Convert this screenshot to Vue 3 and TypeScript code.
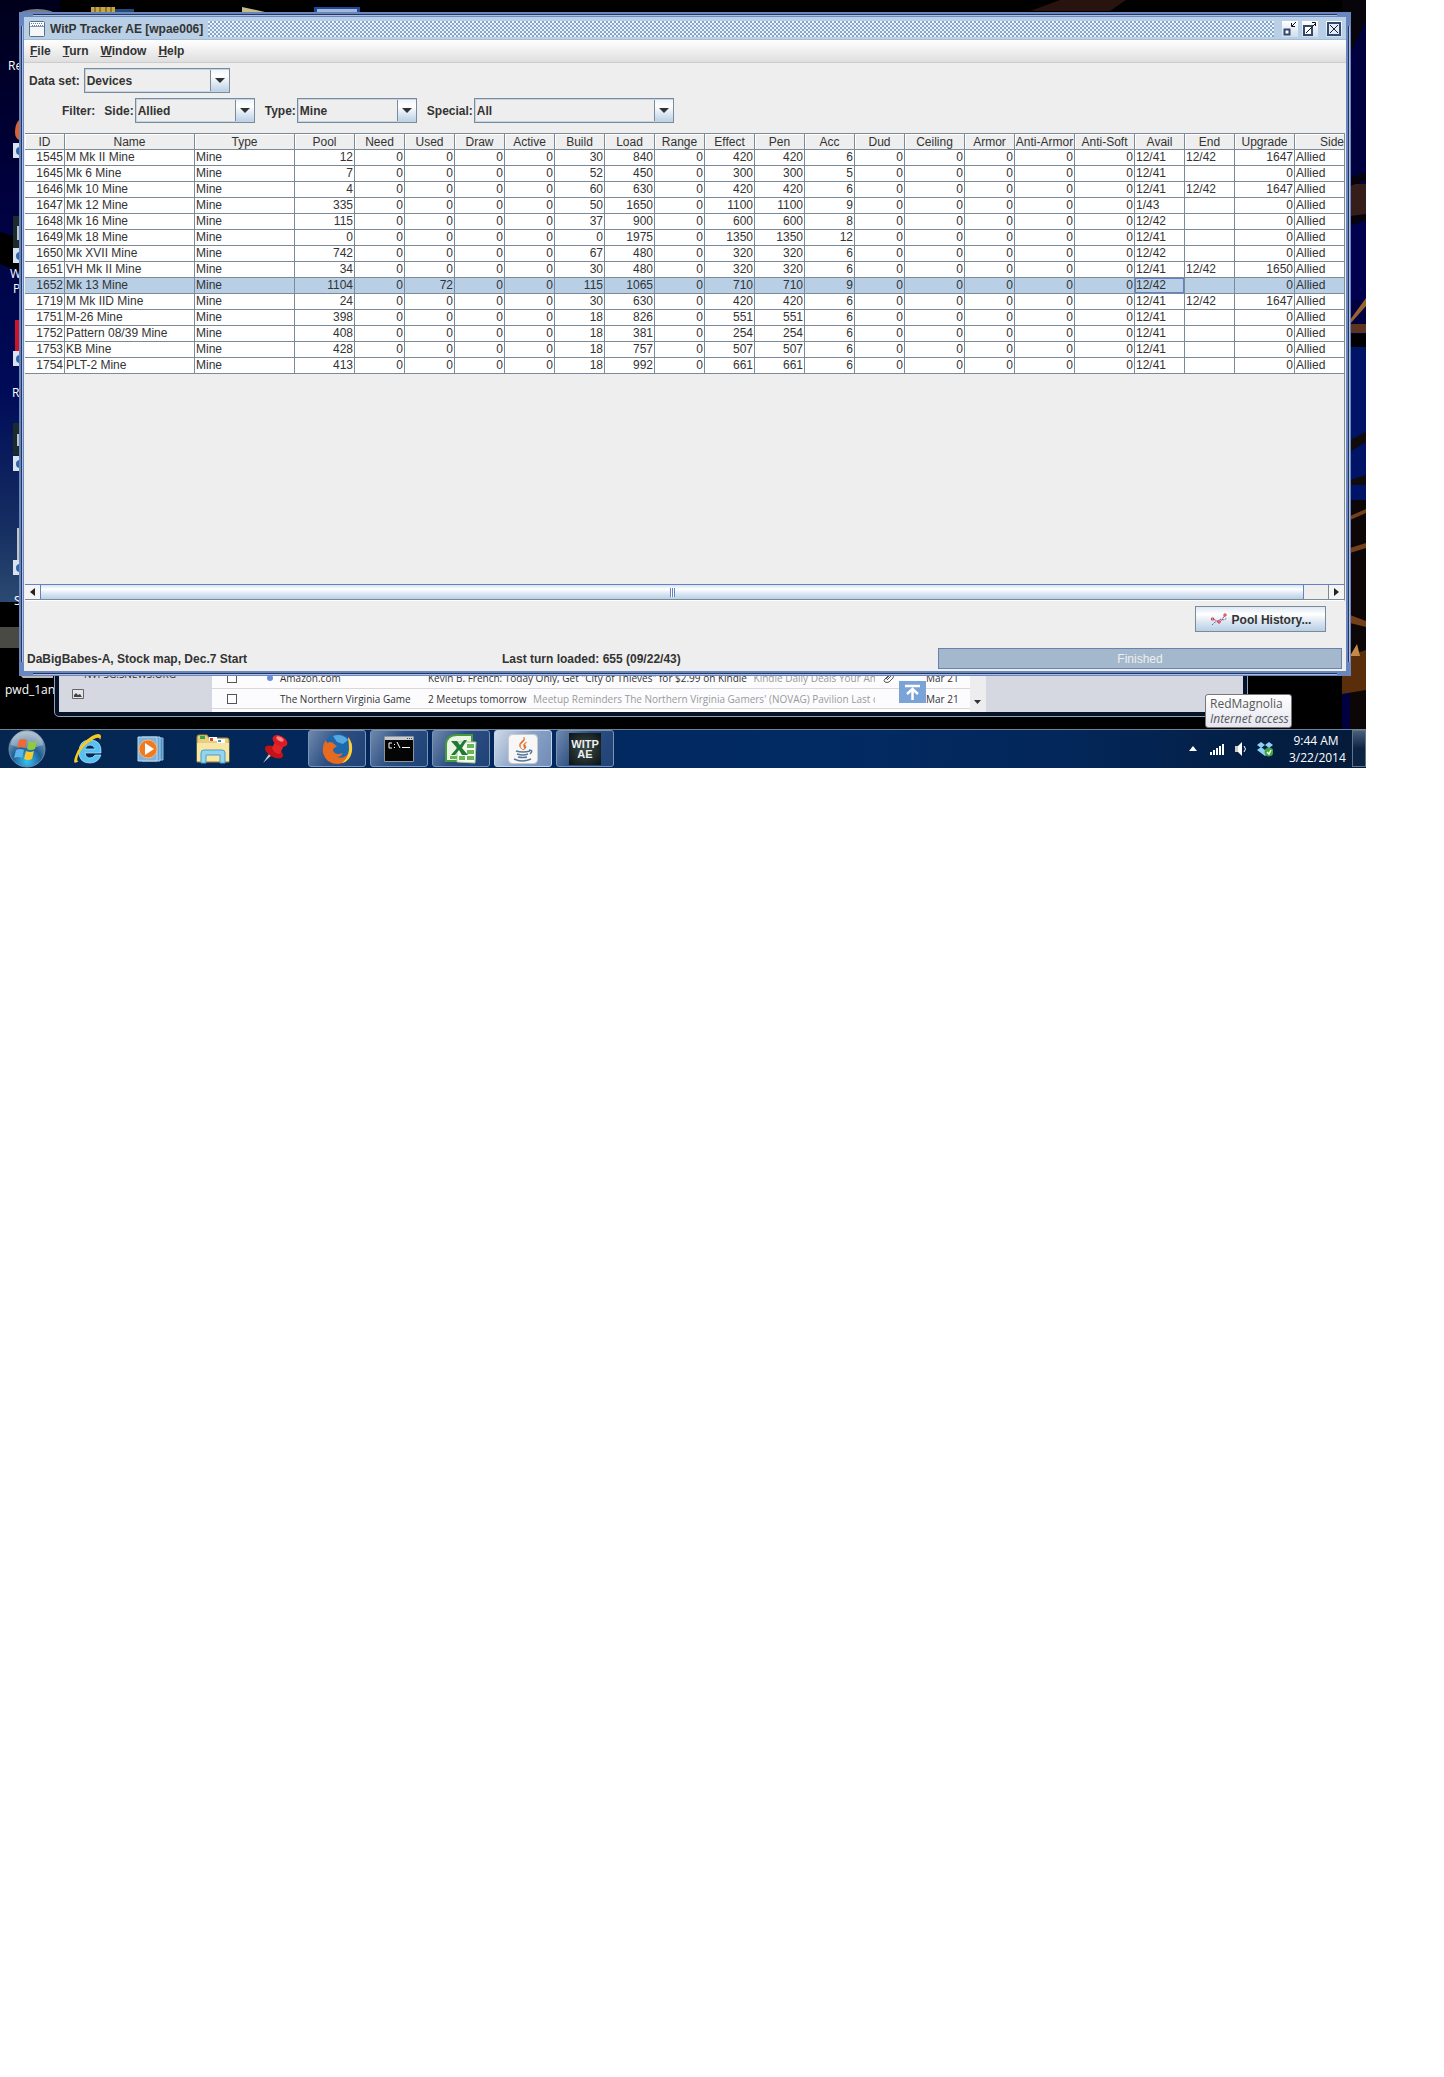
<script setup lang="ts">
import { ref } from 'vue'

interface Column {
  label: string
  width: number
  left?: boolean
}

const columns: Column[] = [
  { label: 'ID', width: 40 },
  { label: 'Name', width: 130, left: true },
  { label: 'Type', width: 100, left: true },
  { label: 'Pool', width: 60 },
  { label: 'Need', width: 50 },
  { label: 'Used', width: 50 },
  { label: 'Draw', width: 50 },
  { label: 'Active', width: 50 },
  { label: 'Build', width: 50 },
  { label: 'Load', width: 50 },
  { label: 'Range', width: 50 },
  { label: 'Effect', width: 50 },
  { label: 'Pen', width: 50 },
  { label: 'Acc', width: 50 },
  { label: 'Dud', width: 50 },
  { label: 'Ceiling', width: 60 },
  { label: 'Armor', width: 50 },
  { label: 'Anti-Armor', width: 60 },
  { label: 'Anti-Soft', width: 60 },
  { label: 'Avail', width: 50, left: true },
  { label: 'End', width: 50, left: true },
  { label: 'Upgrade', width: 60 },
  { label: 'Side', width: 75, left: true },
]

type Device = [number, string, number, number, number, number, number, number, string, string, number]

// id, name, pool, used, build, load, effect, accuracy, avail, end, upgrade
const devices: Device[] = [
  [1545, 'M Mk II Mine', 12, 0, 30, 840, 420, 6, '12/41', '12/42', 1647],
  [1645, 'Mk 6 Mine', 7, 0, 52, 450, 300, 5, '12/41', '', 0],
  [1646, 'Mk 10 Mine', 4, 0, 60, 630, 420, 6, '12/41', '12/42', 1647],
  [1647, 'Mk 12 Mine', 335, 0, 50, 1650, 1100, 9, '1/43', '', 0],
  [1648, 'Mk 16 Mine', 115, 0, 37, 900, 600, 8, '12/42', '', 0],
  [1649, 'Mk 18 Mine', 0, 0, 0, 1975, 1350, 12, '12/41', '', 0],
  [1650, 'Mk XVII Mine', 742, 0, 67, 480, 320, 6, '12/42', '', 0],
  [1651, 'VH Mk II Mine', 34, 0, 30, 480, 320, 6, '12/41', '12/42', 1650],
  [1652, 'Mk 13 Mine', 1104, 72, 115, 1065, 710, 9, '12/42', '', 0],
  [1719, 'M Mk IID Mine', 24, 0, 30, 630, 420, 6, '12/41', '12/42', 1647],
  [1751, 'M-26 Mine', 398, 0, 18, 826, 551, 6, '12/41', '', 0],
  [1752, 'Pattern 08/39 Mine', 408, 0, 18, 381, 254, 6, '12/41', '', 0],
  [1753, 'KB Mine', 428, 0, 18, 757, 507, 6, '12/41', '', 0],
  [1754, 'PLT-2 Mine', 413, 0, 18, 992, 661, 6, '12/41', '', 0],
]

const rows = devices.map(([id, name, pool, used, build, load, effect, acc, avail, end, upgrade]) => [
  id, name, 'Mine', pool, 0, used, 0, 0, build, load, 0, effect, effect, acc, 0, 0, 0, 0, 0, avail, end, upgrade, 'Allied',
])

const selected = ref(1652)
const availColumn = 19
const menus = ['File', 'Turn', 'Window', 'Help']
const dataSet = ref('Devices')
const side = ref('Allied')
const kind = ref('Mine')
const special = ref('All')
</script>

<template>
  <div class="desktop">
    <div class="workspace">
      <svg class="wall wall-left" width="60" height="729" viewBox="0 0 60 729" aria-hidden="true">
        <defs>
          <linearGradient id="sky" x1="0" y1="0" x2="0" y2="1">
            <stop offset="0" stop-color="#00001c" />
            <stop offset=".3" stop-color="#00003c" />
            <stop offset=".65" stop-color="#000b58" />
            <stop offset=".88" stop-color="#162f62" />
            <stop offset="1" stop-color="#2b4a72" />
          </linearGradient>
        </defs>
        <rect width="60" height="602" fill="url(#sky)" />
        <path d="M0 232 20 238V272L0 264Z" fill="#000" />
        <rect y="602" width="60" height="127" fill="#000" />
        <rect y="627" width="20" height="21" fill="#4a4a44" />
        <path d="M19 120q-4 4-4 12 0 6 4 8z" fill="#e0602c" />
        <path d="M13 216h6v32h-6z" fill="#1b2a2a" />
        <path d="M17 226h2v14h-2z" fill="#b8c4c4" />
        <path d="M15 320h4v31h-4z" fill="#cc1426" />
        <path d="M13 423h6v32h-6z" fill="#1b2a2a" />
        <path d="M17 434h2v12h-2z" fill="#b8c4c4" />
        <path d="M17 528h2v32h-2z" fill="#c3c7bf" />
        <g v-for="y in [143, 248, 351, 456, 560]" :key="y">
          <rect x="13" :y="y" width="8" height="15" fill="#d9e2ee" />
          <circle cx="20" :cy="y + 8" r="4" fill="#2d66a8" />
        </g>
        <path d="M21 676h32v2H23z" fill="#b8b8b8" />
      </svg>
      <svg class="wall wall-right" width="24" height="729" viewBox="0 0 24 729" aria-hidden="true">
        <rect width="24" height="729" fill="#00003f" />
        <path d="M0 0h24v20L10 50H0z" fill="#07040b" />
        <path d="M0 182 24 174V300H0z" fill="#00004e" />
        <path d="M6 182 24 174v6L6 188z" fill="#000" />
        <path d="M8 184h16v36l-16 0z" fill="#351d1a" />
        <path d="M8 178l16-6v8l-16 6zM8 216l16-2v6l-16 6z" fill="#08030a" />
        <path d="M8 320 24 298v8L8 324z" fill="#9c6230" />
        <path d="M8 324h16v9H8z" fill="#5d351f" />
        <path d="M8 334h16v13H8z" fill="#000" />
        <path d="M8 347h16v155H8z" fill="#001467" />
        <path d="M8 440l16-8v10l-16 10zM8 480l16-5v10H8z" fill="#120b0b" />
        <path d="M8 500h16v229H8z" fill="#0c0606" />
        <path d="M8 516l16-7v4l-16 7zM8 548l16-5v5l-16 5zM8 615l16 6v6l-16-4z" fill="#74401a" />
        <path d="M0 658l24-8v40l-24 4z" fill="#5b2e0b" />
        <path d="M8 656l7-12 3 12z" fill="#c58a4a" />
      </svg>
      <svg class="wall wall-top" width="1200" height="12" viewBox="0 0 1200 12" aria-hidden="true">
        <ellipse cx="37" cy="15" rx="18" ry="6" fill="#777d86" />
        <path d="M91 7h24v5H91z" fill="#c6a744" />
        <path d="M95 7v5M100 7v5M106 7v5M111 7v5" stroke="#584514" />
        <path d="M115 9h19v3h-19z" fill="#254a7a" />
        <path d="M242 7l23 5h-23z" fill="#c7bb86" />
        <path d="M314 7h46v5h-46z" fill="#1c489d" />
        <path d="M317 9h40v3h-40z" fill="#a6b7d3" />
        <path d="M1060 0h66l-16 11h-80z" fill="#29130e" />
      </svg>
      <span class="label l1">Re</span>
      <span class="label l2">W</span>
      <span class="label l3">P</span>
      <span class="label l4">R</span>
      <span class="label l5">S</span>
      <span class="label l6">pwd_1an</span>

      <section class="mail" aria-label="Mail">
        <div class="folders">
          <span class="cut">NVPSG.SNEWS.ORG</span>
          <svg width="12" height="10" viewBox="0 0 12 10"><path d="M.5.5h11v9H.5z" fill="#e4e6ea" stroke="#666" /><path d="M2 8V6l2-2 2 2 2-1 2 3z" fill="#444" /></svg>
        </div>
        <div class="letters">
          <div class="letter">
            <input type="checkbox" aria-label="Amazon.com" /><i class="dot on"></i>
            <span class="from">Amazon.com</span>
            <span class="subject">Kevin B. French: Today Only, Get "City of Thieves" for $2.99 on Kindle <em>Kindle Daily Deals Your Am</em></span>
            <svg class="clip" width="12" height="10" viewBox="0 0 12 10"><path d="M3 6l4-4q2-1 3 0t0 3L6 9Q4 10 2 9T2 6l4-4M4 7l4-4" fill="none" stroke="#555" /></svg>
            <span class="date">Mar 21</span>
          </div>
          <div class="letter">
            <input type="checkbox" aria-label="The Northern Virginia Gamers" /><i class="dot"></i>
            <span class="from">The Northern Virginia Game</span>
            <span class="subject">2 Meetups tomorrow <em>Meetup Reminders The Northern Virginia Gamers' (NOVAG) Pavilion Last chanc</em></span>
            <span class="clip"></span>
            <span class="date">Mar 21</span>
          </div>
          <button class="to-top" aria-label="Back to top">
            <svg width="17" height="17" viewBox="0 0 17 17"><path d="M1 2h15M8.500 16V6M3 10l5.500-5L14 10" fill="none" stroke="#fff" stroke-width="2.500" /></svg>
          </button>
        </div>
        <div class="mail-scroll"><svg width="7" height="4" viewBox="0 0 7 4"><path d="M0 0h7L3.500 4z" fill="#333" /></svg></div>
      </section>

      <main class="window">
        <div class="inner">
          <header class="title">
            <svg width="16" height="16" viewBox="0 0 16 16"><rect x=".5" y=".5" width="15" height="15" rx="1" fill="#f4f6f8" stroke="#5b6f8c" /><path d="M1 1h14v4H1z" fill="#fff" /><path d="M2 2.500h12M3 4.500h11" stroke="#5b7fae" stroke-dasharray="1 1" /><path d="M1 5.500h14" stroke="#8a97a8" /></svg>
            <h1>WitP Tracker AE [wpae006]</h1>
            <div class="bumps"></div>
            <button class="tb" aria-label="Minimize"><svg width="16" height="16" viewBox="0 0 16 16"><path d="M2.500 8.500h5v5h-5z" fill="#fff" stroke="#33486c" stroke-width="2" /><path d="M14 1l-4 4M9.500 2v3.500H13" fill="none" stroke="#111" /></svg></button>
            <button class="tb" aria-label="Maximize"><svg width="16" height="16" viewBox="0 0 16 16"><path d="M2 5h8v9H2z" fill="#fff" stroke="#33486c" stroke-width="2" /><path d="M4 12l9-9M10 1.500h3.500V5" fill="none" stroke="#111" /></svg></button>
            <button class="tb close" aria-label="Close"><svg width="16" height="16" viewBox="0 0 16 16"><path d="M2 2h12v12H2z" fill="#e4edf7" stroke="#33486c" stroke-width="2" /><path d="M4 4l8 8M12 4l-8 8" stroke="#222" stroke-width="1" /></svg></button>
          </header>
          <nav class="menu">
            <button v-for="m in menus" :key="m"><u>{{ m[0] }}</u>{{ m.slice(1) }}</button>
          </nav>

          <div class="filters">
            <div class="line">
              <label for="set">Data set:</label>
              <span class="combo w146"><select id="set" v-model="dataSet"><option>Devices</option></select><svg width="10" height="5" viewBox="0 0 10 5"><path d="M0 0h10L5 5z" fill="#333" /></svg></span>
            </div>
            <div class="line second">
              <span class="lead">Filter:</span>
              <label for="side">Side:</label>
              <span class="combo w120"><select id="side" v-model="side"><option>Allied</option></select><svg width="10" height="5" viewBox="0 0 10 5"><path d="M0 0h10L5 5z" fill="#333" /></svg></span>
              <label class="next" for="kind">Type:</label>
              <span class="combo w120"><select id="kind" v-model="kind"><option>Mine</option></select><svg width="10" height="5" viewBox="0 0 10 5"><path d="M0 0h10L5 5z" fill="#333" /></svg></span>
              <label class="next" for="special">Special:</label>
              <span class="combo w200"><select id="special" v-model="special"><option>All</option></select><svg width="10" height="5" viewBox="0 0 10 5"><path d="M0 0h10L5 5z" fill="#333" /></svg></span>
            </div>
          </div>

          <div class="pane">
            <div class="viewport">
              <table>
                <colgroup><col v-for="c in columns" :key="c.label" :style="{ width: c.width + 'px' }" /></colgroup>
                <thead>
                  <tr><th v-for="c in columns" :key="c.label" scope="col">{{ c.label }}</th></tr>
                </thead>
                <tbody>
                  <tr v-for="r in rows" :key="r[0]" :class="{ selected: r[0] === selected }" @click="selected = Number(r[0])">
                    <td v-for="(v, i) in r" :key="i" :class="{ left: columns[i].left, focus: i === availColumn }">{{ v }}</td>
                  </tr>
                </tbody>
              </table>
            </div>
            <div class="scrollbar">
              <button aria-label="Scroll left"><svg width="5" height="8" viewBox="0 0 5 8"><path d="M5 0v8L0 4z" fill="#222" /></svg></button>
              <div class="thumb"><i></i></div>
              <div class="track"></div>
              <button aria-label="Scroll right"><svg width="5" height="8" viewBox="0 0 5 8"><path d="M0 0v8l5-4z" fill="#222" /></svg></button>
            </div>
          </div>

          <div class="actions">
            <button class="history">
              <svg width="16" height="14" viewBox="0 0 16 14"><path d="M1 12l3-3 3-1 3-2 3 1 3-2" fill="none" stroke="#4a68b8" stroke-dasharray="2 1" /><path d="M2 6l4 2 3 1 3-4 3-4" fill="none" stroke="#d63a45" stroke-dasharray="3 1" /><path d="M.500 5h2v2h-2zM7 8h2v2H7zM13 1h2v2h-2z" fill="#f4d9df" stroke="#d63a45" /></svg>
              Pool History...
            </button>
          </div>
          <footer class="status">
            <span>DaBigBabes-A, Stock map, Dec.7 Start</span>
            <span>Last turn loaded: 655 (09/22/43)</span>
            <div class="progress" role="progressbar" aria-valuenow="100">Finished</div>
          </footer>
        </div>
      </main>

      <div class="tip" role="tooltip">RedMagnolia<br /><i>Internet access</i></div>
    </div>

    <div class="taskbar">
      <button class="start" aria-label="Start">
        <svg width="38" height="38" viewBox="0 0 38 38">
          <defs>
            <radialGradient id="orb" cx=".5" cy=".85" r=".8"><stop offset="0" stop-color="#35c3f4" /><stop offset=".5" stop-color="#1f5f94" /><stop offset="1" stop-color="#8fa6bb" /></radialGradient>
          </defs>
          <circle cx="19" cy="19" r="18" fill="url(#orb)" stroke="#6f8ba6" />
          <path d="M3 15a16 15 0 0 1 32 0q-16 6-32 0z" fill="#fff" opacity=".3" />
          <path d="M11 10q4-2 8 0l-2 8q-4-2-8 0z" fill="#ee6a32" />
          <path d="M21 11q4 2 8 0l-2 8q-4 2-8 0z" fill="#93c93e" />
          <path d="M8 20q4-2 8 0l-2 8q-4-2-8 0z" fill="#5bb4ea" />
          <path d="M18 21q4 2 8 0l-2 8q-4 2-8 0z" fill="#fbc72e" />
        </svg>
      </button>
      <button class="task" aria-label="Internet Explorer">
        <svg width="34" height="34" viewBox="0 0 34 34"><path d="M29 21H13q1 5 5 5 3 0 5-3h6q-3 8-11 8-11 0-11-11Q7 8 18 8q12 0 11 13zM13 17h10q-1-4-5-4t-5 4z" fill="#56c1f2" stroke="#b6e6fc" stroke-width=".700" /><path d="M7 29q-7 5-4-4Q7 12 20 4q8-4 9 0 0 2-1 4 0-4-6-1Q10 14 6 24q-2 6 1 5z" fill="#f6c928" /></svg>
      </button>
      <button class="task" aria-label="Media Player">
        <svg width="28" height="28" viewBox="0 0 28 28"><path d="M8 3h18v22H8z" fill="#4f8fc4" stroke="#8fc0e4" /><path d="M5 2h18v24H5z" fill="#6aa5d3" stroke="#a8cfec" /><path d="M1 2h19v24H1z" fill="#82b4da" stroke="#b9d8ee" /><circle cx="11" cy="14" r="9" fill="#ee7a22" stroke="#f9b77c" /><path d="M8 8v12l9-6z" fill="#fff" /></svg>
      </button>
      <button class="task" aria-label="Explorer">
        <svg width="34" height="30" viewBox="0 0 34 30"><path d="M1 28V3q0-2 2-2h8l2 3h18q2 0 2 2v22z" fill="#e8cf80" stroke="#a88b3e" /><path d="M4 2h5v3H4z" fill="#3da04a" /><path d="M13 3h8v4h-8z" fill="#fff" /><path d="M14 4h3v3h-3z" fill="#d44a34" /><path d="M21 5h8v4h-8z" fill="#fff" /><path d="M22 6h3v2h-3z" fill="#3e8ad0" /><path d="M1 9h32v18H1z" fill="#f8e7a4" /><path d="M5 29V19q0-3 3-3h18q3 0 3 3v10h-5v-8H10v8z" fill="#93d4ef" stroke="#4a9fc6" /></svg>
      </button>
      <button class="task" aria-label="Pin">
        <svg width="30" height="32" viewBox="0 0 30 32"><path d="M3 30l8-12 3 2z" fill="#c9c9c9" /><ellipse cx="14" cy="19" rx="10" ry="5" transform="rotate(28 14 19)" fill="#c21318" /><path d="M12 15l4-8 8 5-4 9q-6 0-8-6z" fill="#e3252a" /><ellipse cx="20" cy="8" rx="8" ry="5" transform="rotate(30 20 8)" fill="#dd1c22" /><ellipse cx="20" cy="6" rx="4" ry="2" transform="rotate(30 20 6)" fill="#f6888a" /></svg>
      </button>
      <button class="task open" aria-label="Firefox">
        <svg width="32" height="32" viewBox="0 0 32 32"><circle cx="17" cy="15" r="14" fill="#1d67ad" /><path d="M12 3q9-3 15 4l-5 4-6-2z" fill="#55a9de" /><path d="M27 4q5 6 4 14-2 12-14 13Q5 31 2 20 1 12 5 7l1 3 3-1q3 0 4 2l3 2-4 3q0 4 4 5 4 0 6-1-2 4-6 4 9 3 12-6 2-7-1-12z" fill="#e66a1f" /><path d="M27 4q5 6 4 14-2 10-10 12 7-6 7-14 0-6-1-12z" fill="#f9cf3a" /></svg>
      </button>
      <button class="task open" aria-label="Command Prompt">
        <svg width="30" height="26" viewBox="0 0 30 26"><path d="M.500.500h29v25H.500z" fill="#050505" stroke="#8d949c" /><path d="M1 1h28v3H1z" fill="#c7ccd2" /><path d="M23 2.500h5" stroke="#444" stroke-dasharray="1 1" /><path d="M8 7H5v5h3M10.500 8v1M10.500 11v1M13 6l3 6M18 11.500h8" fill="none" stroke="#fff" /></svg>
      </button>
      <button class="task open" aria-label="Excel">
        <svg width="32" height="30" viewBox="0 0 32 30"><path d="M1 27V10Q2 1 12 1h15v26z" fill="#e9f5e2" stroke="#459a3e" stroke-width="2" /><path d="M12 8h19l-1 21-18-1z" fill="#f4faf1" stroke="#9fca97" /><path d="M22 10h7v4h-7zM22 16h7v4h-7zM22 22h7v4h-7zM14 22h6v4h-6zM5 22h7v3H5z" fill="#6cb557" /><path d="M6 7h6l3 4 4-5h3l-5 8 6 7h-6l-3-5-4 5H6l6-7z" fill="#207a35" /></svg>
      </button>
      <button class="task open active" aria-label="Java">
        <svg width="30" height="30" viewBox="0 0 30 30"><rect x=".5" y=".5" width="29" height="29" rx="4" fill="#f7f7f7" stroke="#c9c9c9" /><path d="M16 3q2 3-2 6t1 7q-6-4-2-8 4-3 3-5zM19 8q-5 2-3 5 1 2-1 3 5-2 2-5-1-1 2-3z" fill="#e5702a" stroke="#e5702a" stroke-width=".500" /><path d="M8 17q7 2 14 0M9 20q6 2 11 0M10 23q5 1 9 0M21 16q5 0 1 4M6 25q8 4 17 0" fill="none" stroke="#55789c" stroke-width="1.500" /></svg>
      </button>
      <button class="task open" aria-label="WITP AE">
        <span class="witp">WITP<br />AE</span>
      </button>
      <div class="tray">
        <svg width="8" height="5" viewBox="0 0 8 5"><path d="M0 5h8L4 0z" fill="#fff" /></svg>
        <svg width="15" height="12" viewBox="0 0 15 12"><path d="M0 9h2v3H0zM3 7h2v5H3zM6 5h2v7H6zM9 3h2v9H9zM12 1h2v11h-2z" fill="#fff" /></svg>
        <svg width="14" height="14" viewBox="0 0 14 14"><path d="M1 4h3v6H1z" fill="#ccc" /><path d="M4 4l4-4v14l-4-4z" fill="#fff" /><path d="M10 4q3 3 0 6" fill="none" stroke="#fff" /></svg>
        <svg width="16" height="16" viewBox="0 0 16 16"><path d="M4 1l4 3-4 3-4-3zM12 1l4 3-4 3-4-3zM4 6l4 3-4 3-4-3zM12 6l4 3-4 3-4-3zM8 9l4 3-4 3-4-3z" fill="#8cd2f6" /><circle cx="12" cy="11" r="4.500" fill="#3fa63c" /><path d="M10 11l2 2 2-4" fill="none" stroke="#fff" stroke-width="1.500" /></svg>
      </div>
      <time class="clock">9:44 AM<br />3/22/2014</time>
      <button class="peek" aria-label="Show desktop"></button>
    </div>
  </div>
</template>

<style>
body {
  background: #fff;
}
</style>

<style scoped>
* {
  box-sizing: border-box;
}
button {
  border: 0;
  padding: 0;
  margin: 0;
  background: none;
  font: inherit;
  color: inherit;
}
svg {
  display: block;
  flex: none;
}
.desktop {
  max-width: 1366px;
  font: 12px/16px 'Liberation Sans', Arial, sans-serif;
  color: #333;
}
.workspace {
  position: relative;
  overflow: hidden;
  padding: 12px 15px 53px 19px;
  background: #000;
}
.wall {
  position: absolute;
  top: 0;
  left: 0;
}
.wall-right {
  left: auto;
  right: 0;
}
.label {
  position: absolute;
  left: 8px;
  top: 58px;
  color: #fff;
  font-family: 'Open Sans', 'Noto Sans', sans-serif;
  white-space: nowrap;
}
.l2 { top: 266px; left: 10px; }
.l3 { top: 281px; left: 13px; }
.l4 { top: 385px; left: 12px; }
.l5 { top: 593px; left: 14px; }
.l6 { top: 682px; left: 5px; }

.mail {
  position: absolute;
  left: 54px;
  right: 118px;
  bottom: 12px;
  height: 72px;
  display: flex;
  background: #d5d8e0;
  border: 5px solid #061226;
  border-top: 0;
  border-radius: 0 0 5px 5px;
  outline: 1px solid #8da0b8;
  outline-offset: -1px;
  font: 10px/20px 'Open Sans', 'Noto Sans', sans-serif;
}
.folders {
  width: 153px;
  padding: 21px 0 0 13px;
  overflow: hidden;
}
.cut {
  display: block;
  height: 20px;
  padding-left: 12px;
  line-height: 16px;
  white-space: nowrap;
  color: #333;
}
.folders svg {
  margin-top: 3px;
}
.letters {
  position: relative;
  flex: 0 1 758px;
  padding-top: 23px;
  background: #fcfcfe;
}
.letter {
  display: flex;
  align-items: center;
  height: 20px;
  padding-left: 15px;
  border-bottom: 1px solid #d8d8dc;
  white-space: nowrap;
}
.letter:first-child {
  height: 21px;
}
.letter input {
  appearance: none;
  flex: none;
  width: 10px;
  height: 10px;
  margin: 0;
  border: 1px solid #555;
  background: #fff;
}
.dot {
  flex: none;
  width: 6px;
  height: 6px;
  margin: 0 7px 0 30px;
  border-radius: 50%;
}
.on {
  background: #6b8be0;
}
.from {
  flex: none;
  width: 148px;
}
.subject {
  flex: 0 1 447px;
  overflow: hidden;
}
.subject em {
  margin-left: 4px;
  font-style: normal;
  color: #999;
}
.clip {
  flex: none;
  width: 12px;
  margin: 0 31px 0 8px;
}
.to-top {
  position: absolute;
  right: 44px;
  bottom: 9px;
  width: 27px;
  height: 22px;
  padding: 0 5px;
  background: #7aa3d8;
}
.mail-scroll {
  width: 16px;
  padding: 55px 4px 0;
  background: #ededf0;
}

.window {
  position: relative;
  padding: 5px;
  background: #6a86bf;
}
.window::before,
.window::after {
  content: '';
  position: absolute;
  pointer-events: none;
}
.window::before {
  inset: 14px 2px;
  border: solid #27345c;
  border-width: 0 1px;
  box-shadow: 1px 0 #a9c0e4, inset 1px 0 #a9c0e4;
}
.window::after {
  inset: 2px 14px;
  border: solid #27345c;
  border-width: 1px 0;
  box-shadow: 0 1px #a9c0e4, inset 0 1px #a9c0e4;
}
.inner {
  position: relative;
  z-index: 1;
  background: #eee;
  font-weight: bold;
}
.title {
  display: flex;
  align-items: center;
  height: 23px;
  padding: 1px 4px 0 5px;
  background: #b8cfe5;
  border-bottom: 1px solid #a3bcd8;
}
.title h1 {
  margin: 0 5px;
  font-size: 12px;
  line-height: 16px;
  white-space: nowrap;
}
.bumps {
  flex: 1;
  height: 16px;
  margin-right: 4px;
  background:
    radial-gradient(circle at 1px 1px, #eaf3fb 1px, transparent 1px) 0 0 / 4px 4px,
    radial-gradient(circle at 1px 1px, #eaf3fb 1px, transparent 1px) 2px 2px / 4px 4px,
    #87a6cc;
}
.tb {
  width: 16px;
  margin-left: 4px;
  background: linear-gradient(#fff, #cfdeee);
}
.tb + .tb.close {
  margin-left: 8px;
}
.menu {
  display: flex;
  gap: 12px;
  height: 23px;
  padding: 0 6px;
  background: linear-gradient(#fff, #dedede);
  border-bottom: 1px solid #ccc;
}
.filters {
  padding: 5px 5px 10px;
}
.line {
  display: flex;
  align-items: center;
  height: 25px;
}
.second {
  margin-top: 5px;
  padding-left: 33px;
}
.lead {
  margin-right: 9px;
}
.next {
  margin-left: 10px;
}
.combo {
  position: relative;
  display: block;
  height: 25px;
  margin-left: 4px;
}
.second .combo {
  margin-left: 1px;
}
.w146 { width: 146px; }
.w120 { width: 120px; }
.w200 { width: 200px; }
.combo select {
  appearance: none;
  width: 100%;
  height: 25px;
  padding: 0 2px;
  border: 1px solid #7a8a99;
  border-radius: 0;
  background:
    linear-gradient(#7a8a99, #7a8a99) right 18px top / 1px 100% no-repeat,
    linear-gradient(#eef4fa, #fff 30%, #b8cfe5) right / 18px 100% no-repeat,
    #eee;
  box-shadow: inset 1px 1px #c2d4e6, inset 0 -1px #c2d4e6;
  font: inherit;
  color: #333;
}
.combo svg {
  position: absolute;
  right: 5px;
  top: 10px;
  pointer-events: none;
}
.pane {
  margin: 0 1px;
  border: 1px solid #7a8a99;
  border-left: 0;
  border-bottom: 1px solid #fff;
}
.viewport {
  height: 450px;
  overflow: hidden;
}
table {
  width: 1345px;
  table-layout: fixed;
  border-spacing: 0;
  font-weight: normal;
}
th,
td {
  height: 16px;
  padding: 0 1px;
  border: solid #7a8a99;
  border-width: 0 1px 1px 0;
  line-height: 15px;
  white-space: nowrap;
  overflow: hidden;
}
th {
  padding: 2px 0 0;
  line-height: 13px;
  font-weight: normal;
  background: #eee;
  box-shadow: inset 1px 1px #fff;
}
td {
  text-align: right;
  background: #fff;
}
td.left {
  text-align: left;
}
.selected td {
  background: #b8cfe5;
}
.selected .focus {
  box-shadow: inset 0 0 0 1px #6382bf;
}
.scrollbar {
  display: flex;
  height: 16px;
  border-top: 1px solid #6382bf;
  border-bottom: 1px solid #7a8a99;
}
.scrollbar button {
  display: grid;
  place-items: center;
  width: 15px;
  background: #f4f4f4;
}
.thumb {
  display: grid;
  place-items: center;
  flex: 1;
  border: solid #6382bf;
  border-width: 0 1px;
  background: linear-gradient(#d6e4f2, #fff 30%, #dde8f3 60%, #b8cfe5);
}
.thumb i {
  width: 5px;
  height: 9px;
  background: repeating-linear-gradient(90deg, #6382bf 0 1px, #fff 1px 2px);
}
.track {
  width: 25px;
  border-right: 1px solid #7a8a99;
}
.actions {
  display: flex;
  justify-content: flex-end;
  padding: 5px 20px 16px;
}
.history {
  display: flex;
  align-items: center;
  justify-content: center;
  gap: 5px;
  width: 131px;
  height: 26px;
  padding: 1px 0 0 1px;
  border: 1px solid #7a8a99;
  background: linear-gradient(#dde8f3, #fff 30%, #dde8f3 60%, #b8cfe5);
}
.status {
  display: grid;
  grid-template-columns: 475fr 436fr 404fr;
  align-items: center;
  padding: 0 4px 2px 3px;
}
.progress {
  height: 21px;
  border: 1px solid #6a82ab;
  background: #a3b8cc;
  color: #eee;
  font-weight: normal;
  line-height: 20px;
  text-align: center;
}

.tip {
  position: absolute;
  right: 74px;
  bottom: 1px;
  width: 87px;
  height: 34px;
  padding: 1px 4px;
  border: 1px solid #777;
  border-radius: 3px;
  background: linear-gradient(#fff, #e4e5f0);
  color: #575757;
  font: 12px/15px 'Open Sans', 'Noto Sans', sans-serif;
  white-space: nowrap;
}

.taskbar {
  display: flex;
  height: 39px;
  padding-bottom: 1px;
  border-top: 1px solid #6f8296;
  background: linear-gradient(90deg, #04264f, #02275c 25%, #022a63 60%, #03275a 78%, #041a38);
}
.start {
  display: flex;
  align-items: center;
  width: 60px;
  padding-left: 8px;
}
.task {
  display: grid;
  place-items: center;
  width: 58px;
  margin-right: 4px;
  border-radius: 3px;
}
.open {
  border: 1px solid #7d93b4;
  background: linear-gradient(120deg, #6f89ad, #2d4f82 45%, #1f4277);
}
.active {
  border-color: #c6d3e6;
  background: linear-gradient(120deg, #cfdaea, #8ba3c6 50%, #6f8cb8);
}
.witp {
  width: 32px;
  height: 32px;
  padding-top: 6px;
  background: radial-gradient(#3b4c4c, #0c1212);
  color: #eee;
  font: bold 11px/10px 'Liberation Sans', Arial, sans-serif;
}
.tray {
  display: flex;
  align-items: center;
  gap: 9px;
  margin-left: auto;
  padding-right: 16px;
}
.tray svg:first-child {
  margin-right: 4px;
}
.clock {
  width: 54px;
  padding-top: 2px;
  color: #fff;
  font: 12px/17px 'Open Sans', 'Noto Sans', sans-serif;
  text-align: center;
  white-space: nowrap;
}
.peek {
  width: 14px;
  margin-left: 9px;
  border: 1px solid #60748c;
  background: linear-gradient(#4a5e78, #0c2342 50%);
}
</style>
